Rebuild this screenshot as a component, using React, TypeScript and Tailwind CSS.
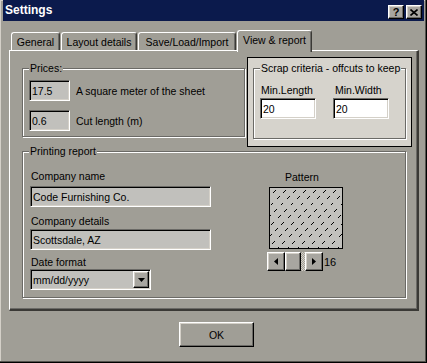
import React from "react";

const SUNKEN =
  "border border-t-[#6b6a66] border-l-[#6b6a66] border-b-white border-r-white shadow-[inset_1px_1px_0_#000,inset_-1px_-1px_0_#d4d0c8]";
const RAISED =
  "border border-t-white border-l-white border-b-black border-r-black shadow-[inset_-1px_-1px_0_#6b6a66,inset_1px_1px_0_#d4d0c8]";

function Group({
  label,
  className,
  labelBg,
  children,
}: {
  label: string;
  className: string;
  labelBg: string;
  children?: React.ReactNode;
}) {
  return (
    <div className={`relative border border-[#6b6a66] shadow-[inset_1px_1px_0_#fff,1px_1px_0_#fff] ${className}`}>
      <span className={`absolute left-[6px] top-[-7px] px-[1px] leading-[12px] whitespace-nowrap ${labelBg}`}>{label}</span>
      {children}
    </div>
  );
}

function Tab({ label, w, selected }: { label: string; w: string; selected?: boolean }) {
  return (
    <div
      className={`${w} ${
        selected ? "h-[22px] -mb-[2px] relative z-10 pt-[3px]" : "h-[18px] pt-[3px]"
      } bg-[#a09e96] border-l border-t border-white border-r border-r-[#3a3935] rounded-tl-[3px] rounded-tr-[3px] shadow-[inset_-1px_0_0_#6b6a66] text-center whitespace-nowrap`}
    >
      {label}
    </div>
  );
}

function Tri({ dir }: { dir: "left" | "right" | "down" }) {
  if (dir === "down")
    return (
      <svg width="7" height="4" viewBox="0 0 7 4">
        <path d="M0 0H7L3.5 4Z" fill="#000" />
      </svg>
    );
  if (dir === "left")
    return (
      <svg width="4" height="7" viewBox="0 0 4 7">
        <path d="M4 0V7L0 3.5Z" fill="#000" />
      </svg>
    );
  return (
    <svg width="4" height="7" viewBox="0 0 4 7">
      <path d="M0 0V7L4 3.5Z" fill="#000" />
    </svg>
  );
}

function Hatch() {
  const lines = [];
  for (let c = -64; c < 140; c += 10) {
    lines.push(
      <line key={c} x1={c} y1={62} x2={c + 62} y2={0} stroke="#000" strokeWidth="1" strokeDasharray="4 5" />
    );
  }
  return (
    <svg width="72" height="60" viewBox="0 0 72 60" shapeRendering="crispEdges">
      {lines}
    </svg>
  );
}

export default function App() {
  return (
    <div className="font-['Liberation_Sans',Arial,sans-serif] text-[10.5px] leading-[12px] text-black w-[427px] h-[363px] bg-[#a09e96] border-r border-b border-black shadow-[inset_-1px_-1px_0_#55534e,inset_1px_1px_0_#d4d0c8] flex flex-col overflow-hidden">
      {/* Title bar */}
      <div className="ml-[3px] mr-[2px] h-[21px] shrink-0 bg-[#0b1a4c] flex items-start pl-[2px] pr-[2px]">
        <span className="text-white font-bold text-[12px] leading-[21px]">Settings</span>
        <div className="ml-auto flex gap-[2px] pt-[5px]">
          <div className={`w-[16px] h-[14px] bg-[#a8a6a0] ${RAISED} flex items-center justify-center font-bold text-[11px] leading-[11px]`}>
            ?
          </div>
          <div className={`w-[16px] h-[14px] bg-[#a8a6a0] ${RAISED} flex items-center justify-center`}>
            <svg width="8" height="7" viewBox="0 0 8 7">
              <path d="M0.5 0.5L7.5 6.5M7.5 0.5L0.5 6.5" stroke="#000" strokeWidth="1.6" />
            </svg>
          </div>
        </div>
      </div>

      {/* Tabs */}
      <div className="mt-[9px] ml-[11px] h-[20px] flex items-end gap-[1px] shrink-0">
        <Tab label="General" w="w-[49px]" />
        <Tab label="Layout details" w="w-[76px]" />
        <Tab label="Save/Load/Import" w="w-[98px]" />
        <Tab label="View & report" w="w-[75px]" selected />
      </div>

      {/* Panel */}
      <div className="ml-[9px] w-[410px] h-[261px] shrink-0 border-l border-t border-white border-r-2 border-b-2 border-r-[#3a3935] border-b-[#3a3935] shadow-[inset_-1px_-1px_0_#6b6a66] flex flex-col">
        <div className="flex items-start">
          <Group label="Prices:" labelBg="bg-[#a09e96]" className="ml-[12px] mt-[17px] w-[223px] h-[69px]">
            <div className="flex flex-col pl-[6px] pt-[11px]">
              <div className="flex items-center">
                <div className={`w-[41px] h-[21px] bg-[#c1c0bc] ${SUNKEN} pl-[2px] flex items-center`}>17.5</div>
                <span className="ml-[6px]">A square meter of the sheet</span>
              </div>
              <div className="flex items-center mt-[9px]">
                <div className={`w-[41px] h-[21px] bg-[#c1c0bc] ${SUNKEN} pl-[2px] flex items-center`}>0.6</div>
                <span className="ml-[6px]">Cut length (m)</span>
              </div>
            </div>
          </Group>

          <div className="ml-[2px] mt-[6px] w-[165px] h-[90px] border border-black bg-[#d6d3cc]">
            <Group
              label="Scrap criteria - offcuts to keep"
              labelBg="bg-[#d6d3cc]"
              className="ml-[5px] mt-[10px] w-[153px] h-[71px]"
            >
              <div className="flex pl-[6px] pt-[15px]">
                <div className="flex flex-col">
                  <span className="ml-[1px]">Min.Length</span>
                  <div className={`mt-[2px] w-[56px] h-[21px] bg-white ${SUNKEN} pl-[2px] flex items-center`}>20</div>
                </div>
                <div className="flex flex-col ml-[17px]">
                  <span className="ml-[2px]">Min.Width</span>
                  <div className={`mt-[2px] w-[56px] h-[21px] bg-white ${SUNKEN} pl-[2px] flex items-center`}>20</div>
                </div>
              </div>
            </Group>
          </div>
        </div>

        <Group label="Printing report" labelBg="bg-[#a09e96]" className="ml-[12px] mt-[4px] w-[384px] h-[147px]">
          <div className="flex items-start">
            <div className="flex flex-col pl-[7px] pt-[18px]">
              <span className="ml-[1px]">Company name</span>
              <div className={`mt-[4px] w-[181px] h-[21px] bg-[#c1c0bc] ${SUNKEN} pl-[2px] flex items-center`}>
                Code Furnishing Co.
              </div>
              <span className="ml-[1px] mt-[8px]">Company details</span>
              <div className={`mt-[2px] w-[181px] h-[21px] bg-[#c1c0bc] ${SUNKEN} pl-[2px] flex items-center`}>
                Scottsdale, AZ
              </div>
              <span className="ml-[1px] mt-[6px]">Date format</span>
              <div className={`mt-[1px] w-[121px] h-[21px] bg-[#c1c0bc] ${SUNKEN} pl-[2px] pr-[1px] flex items-center`}>
                <span>mm/dd/yyyy</span>
                <div className={`ml-auto w-[16px] h-[17px] bg-[#a8a6a0] ${RAISED} flex items-center justify-center`}>
                  <Tri dir="down" />
                </div>
              </div>
            </div>

            <div className="flex flex-col ml-[56px] pt-[19px]">
              <span className="ml-[18px]">Pattern</span>
              <div className="mt-[4px] ml-[2px] w-[74px] h-[62px] border border-black bg-[#c2c1bd]">
                <Hatch />
              </div>
              <div className="mt-[3px] h-[19px] flex items-center">
                <div className={`w-[18px] h-[19px] bg-[#a8a6a0] ${RAISED} flex items-center justify-center`}>
                  <Tri dir="left" />
                </div>
                <div className={`w-[16px] h-[19px] bg-[#a8a6a0] ${RAISED}`} />
                <div className="w-[4px] h-[19px] bg-[repeating-conic-gradient(#d4d0c8_0%_25%,#a09e96_0%_50%)] bg-[length:2px_2px]" />
                <div className={`w-[18px] h-[19px] bg-[#a8a6a0] ${RAISED} flex items-center justify-center`}>
                  <Tri dir="right" />
                </div>
                <span className="ml-[1px] text-[11px]">16</span>
              </div>
            </div>
          </div>
        </Group>
      </div>

      {/* OK */}
      <div className={`mt-[11px] ml-[179px] w-[75px] h-[25px] shrink-0 bg-[#a09e96] ${RAISED} flex items-center justify-center`}>
        OK
      </div>
    </div>
  );
}
